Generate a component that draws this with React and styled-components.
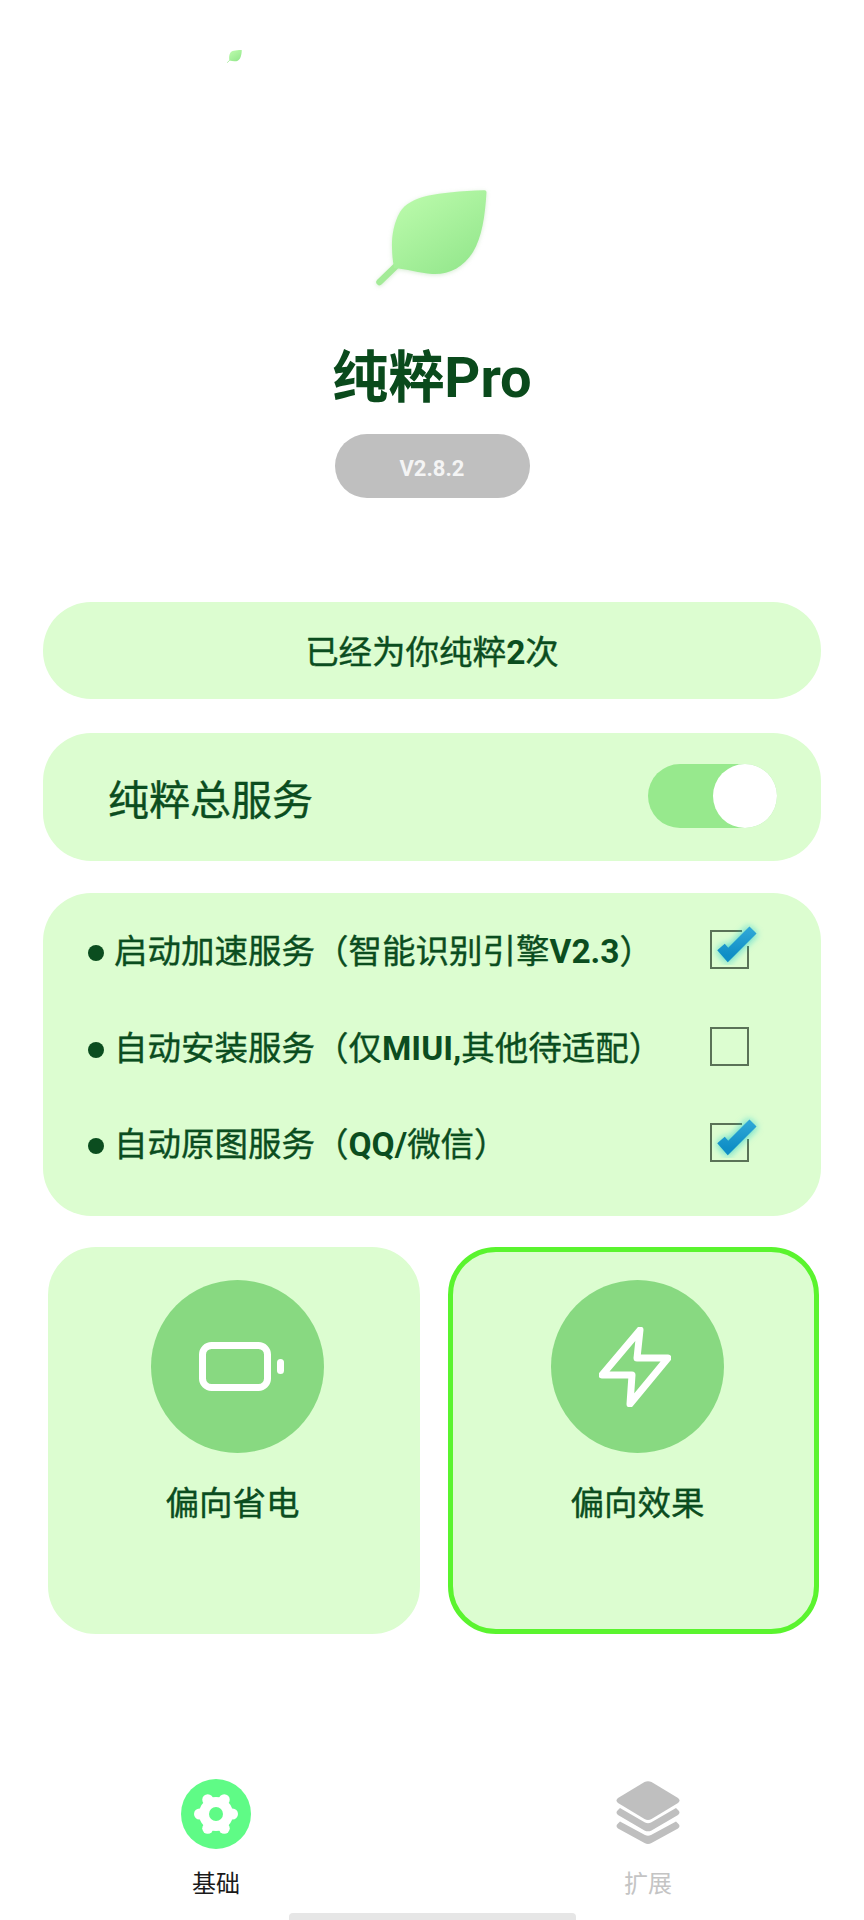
import React from "react";
import styled, { createGlobalStyle } from "styled-components";

const Global = createGlobalStyle`
  html, body { margin: 0; padding: 0; background: #fff; }
  * { box-sizing: border-box; }
  body { font-family: Roboto, "Noto Sans CJK SC", sans-serif; }
`;

const Page = styled.div`
  position: relative;
  width: 864px;
  height: 1920px;
  background: #fff;
  overflow: hidden;
  display: flex;
  flex-direction: column;
  align-items: center;
  color: #0b4d1f;
`;

const FloatingLeaf = styled.svg`
  position: absolute;
  left: 227px;
  top: 50px;
  width: 15px;
  height: 13px;
`;

const BigLeaf = styled.svg`
  width: 112px;
  height: 96px;
  filter: drop-shadow(0 1px 2px rgba(120, 190, 110, 0.3));
`;

const Hero = styled.header`
  display: flex;
  flex-direction: column;
  align-items: center;
  padding-top: 190px;
  height: 602px;
`;

const Title = styled.h1`
  margin: 60px 0 0;
  font-size: 56px;
  line-height: 64px;
  font-weight: 700;
  color: #0a4a1c;
`;

const Version = styled.div`
  margin-top: 24px;
  width: 195px;
  height: 64px;
  border-radius: 32px;
  background: #bfbfbf;
  color: #f4f4f4;
  font-size: 22px;
  font-weight: 700;
  display: flex;
  align-items: center;
  justify-content: center;
  padding-top: 5px;
`;

const Cards = styled.main`
  width: 778px;
  display: flex;
  flex-direction: column;
`;

const Card = styled.section`
  background: #dcfdd0;
  border-radius: 48px;
`;

const Latin = styled.b`
  font-weight: 700;
  -webkit-text-stroke: 0;
`;

const CountCard = styled(Card)`
  height: 97px;
  display: flex;
  align-items: center;
  justify-content: center;
  padding-bottom: 2px;
  font-size: 33.5px;
  font-weight: 400;
  -webkit-text-stroke: 0.4px #0b4d1f;
`;

const ServiceCard = styled(Card)`
  margin-top: 34px;
  height: 128px;
  display: flex;
  align-items: center;
  justify-content: space-between;
  padding: 0 44px 0 65px;
  font-size: 41px;
  font-weight: 400;
  -webkit-text-stroke: 0.4px #0b4d1f;
`;

const Toggle = styled.div`
  width: 129px;
  height: 64px;
  margin-bottom: 2px;
  border-radius: 32px;
  background: #97e98d;
  display: flex;
  justify-content: flex-end;
`;

const Knob = styled.div`
  width: 64px;
  height: 64px;
  border-radius: 50%;
  background: #fff;
`;

const OptionCard = styled(Card)`
  margin-top: 32px;
  height: 323px;
  padding: 8px 72px 0 45px;
  display: flex;
  flex-direction: column;
`;

const Option = styled.div`
  height: 96.7px;
  display: flex;
  align-items: center;
  justify-content: space-between;
  font-size: 33.5px;
  font-weight: 400;
  -webkit-text-stroke: 0.4px #0b4d1f;
`;

const OptionLabel = styled.span`
  display: flex;
  align-items: center;
  gap: 10px;
  padding-bottom: 2px;
`;

const Dot = styled.i`
  width: 16px;
  height: 16px;
  margin-top: 9px;
  border-radius: 50%;
  background: #0b4d1f;
`;

const CheckBox = styled.div`
  position: relative;
  width: 39px;
  height: 39px;
  border: 2px solid #5a7257;
`;

const CheckMark = styled.svg`
  position: absolute;
  left: 0;
  top: -12px;
  width: 44px;
  height: 44px;
  overflow: visible;
`;

const Modes = styled.div`
  margin-top: 31px;
  align-self: flex-start;
  margin-left: 48px;
  width: 771px;
  display: grid;
  grid-template-columns: 372px 371px;
  justify-content: space-between;
`;

const Mode = styled.button`
  height: 387px;
  border-radius: 48px;
  background: #dcfdd0;
  border: 5px solid ${(p) => (p.$active ? "#5af42e" : "#dcfdd0")};
  padding: 28px 0 0;
  display: flex;
  flex-direction: column;
  align-items: center;
  font: inherit;
  color: inherit;
  font-size: 33.5px;
  font-weight: 400;
  -webkit-text-stroke: 0.4px #0b4d1f;
`;

const ModeIcon = styled.div`
  width: 173px;
  height: 173px;
  margin-left: 7px;
  border-radius: 50%;
  background: #88d981;
  display: flex;
  align-items: center;
  justify-content: center;
`;

const BatteryIcon = styled.svg`
  width: 86px;
  height: 49px;
  margin-left: 8px;
`;

const BoltIcon = styled.svg`
  width: 72px;
  height: 80px;
  margin-right: 4px;
`;

const ModeLabel = styled.span`
  margin-top: 23px;
  margin-left: ${(p) => p.$offset}px;
`;

const Nav = styled.nav`
  position: absolute;
  left: 0;
  right: 0;
  bottom: 0;
  height: 141px;
  display: grid;
  grid-template-columns: 432px 432px;
`;

const Tab = styled.div`
  display: flex;
  flex-direction: column;
  align-items: center;
  font-size: 24px;
  line-height: 30px;
  color: ${(p) => (p.$active ? "#1a1a1a" : "#c4c4c4")};
`;

const TabIcon = styled.div`
  width: 70px;
  height: 70px;
  border-radius: 50%;
  background: ${(p) => (p.$active ? "#5ffb86" : "transparent")};
  padding-top: ${(p) => (p.$active ? "0" : "2px")};
  display: flex;
  align-items: ${(p) => (p.$active ? "center" : "flex-start")};
  justify-content: center;
`;

const TabLabel = styled.span`
  margin-top: 20px;
`;

const GestureBar = styled.div`
  position: absolute;
  left: 289px;
  bottom: 0;
  width: 287px;
  height: 7px;
  border-radius: 4px 4px 0 0;
  background: #e6e6e6;
`;

const Check = ({ id }) => (
  <CheckMark viewBox="0 0 44 44">
    <defs>
      <linearGradient id={id} x1="0" y1="0" x2="0" y2="1">
        <stop offset="0" stopColor="#2ea6d6" />
        <stop offset="1" stopColor="#0f8ec6" />
      </linearGradient>
      <filter id={id + "g"} x="-40%" y="-40%" width="180%" height="180%">
        <feGaussianBlur stdDeviation="3.500" />
      </filter>
    </defs>
    <rect x="30" y="8" width="8" height="18" fill="#dcfdd0" />
    <path d="M9 27 L16 35 L41 10" fill="none" stroke="#1fc8cc" strokeOpacity="0.7" strokeWidth="12" filter={`url(#${id}g)`} />
    <path d="M9 27 L16 35 L41 10" fill="none" stroke={`url(#${id})`} strokeWidth="10" />
  </CheckMark>
);

const LeafShape = ({ id }) => (
  <>
    <defs>
      <linearGradient id={id} x1="0.2" y1="0.1" x2="0.8" y2="0.9">
        <stop offset="0" stopColor="#b8f9a9" />
        <stop offset="1" stopColor="#96e88e" />
      </linearGradient>
    </defs>
    <path d="M3.500 92 L19 77" stroke="#a3eb97" strokeWidth="6.500" strokeLinecap="round" fill="none" />
    <path
      d="M108 0.200 Q110.500 0 110.500 2 C109 27 106 47 97 62 C87 78 72 85 56 84 C44 83 30 79 18 78 C15 60 14 40 24 22 C34 6 60 2 108 0.200 Z"
      fill={`url(#${id})`}
    />
  </>
);

const gearLobes = [0, 60, 120, 180, 240, 300].map((a) => ({
  cx: 22 + 16.5 * Math.cos((a * Math.PI) / 180),
  cy: 20 + 16.5 * Math.sin((a * Math.PI) / 180),
}));

export default function App() {
  return (
    <Page>
      <Global />
      <FloatingLeaf viewBox="0 0 112 96">
        <LeafShape id="leaf-small" />
      </FloatingLeaf>
      <Hero>
        <BigLeaf viewBox="0 0 112 96">
          <LeafShape id="leaf-big" />
        </BigLeaf>
        <Title>纯粹Pro</Title>
        <Version>V2.8.2</Version>
      </Hero>
      <Cards>
        <CountCard>
          <span>已经为你纯粹<Latin>2</Latin>次</span>
        </CountCard>
        <ServiceCard>
          纯粹总服务
          <Toggle>
            <Knob />
          </Toggle>
        </ServiceCard>
        <OptionCard>
          <Option>
            <OptionLabel><Dot /><span>启动加速服务（智能识别引擎<Latin>V2.3</Latin>）</span></OptionLabel>
            <CheckBox><Check id="c1" /></CheckBox>
          </Option>
          <Option>
            <OptionLabel><Dot /><span>自动安装服务（仅<Latin>MIUI,</Latin>其他待适配）</span></OptionLabel>
            <CheckBox />
          </Option>
          <Option>
            <OptionLabel><Dot /><span>自动原图服务（<Latin>QQ/</Latin>微信）</span></OptionLabel>
            <CheckBox><Check id="c2" /></CheckBox>
          </Option>
        </OptionCard>
      </Cards>
      <Modes>
        <Mode>
          <ModeIcon>
            <BatteryIcon viewBox="0 0 86 49" fill="none">
              <rect x="3.500" y="3.500" width="65" height="42" rx="9" stroke="#fff" strokeWidth="7" />
              <rect x="78" y="17" width="7" height="15" rx="3.500" fill="#fff" />
            </BatteryIcon>
          </ModeIcon>
          <ModeLabel $offset={-3}>偏向省电</ModeLabel>
        </Mode>
        <Mode $active>
          <ModeIcon>
            <BoltIcon viewBox="0 0 72 80" fill="none">
              <path d="M41 3 L3 48 H33 L31 77 L69 31 H38 Z" stroke="#fff" strokeWidth="7" strokeLinejoin="round" />
            </BoltIcon>
          </ModeIcon>
          <ModeLabel $offset={8}>偏向效果</ModeLabel>
        </Mode>
      </Modes>
      <Nav>
        <Tab $active>
          <TabIcon $active>
            <svg width="44" height="40" viewBox="0 0 44 40">
              <circle cx="22" cy="20" r="17" fill="#fff" />
              {gearLobes.map((l) => (
                <circle key={l.cx + "-" + l.cy} cx={l.cx} cy={l.cy} r="5.500" fill="#fff" />
              ))}
              <circle cx="22" cy="20" r="7" fill="#5ffb86" />
            </svg>
          </TabIcon>
          <TabLabel>基础</TabLabel>
        </Tab>
        <Tab>
          <TabIcon>
            <svg width="66" height="64" viewBox="-1 0 66 64" fill="#bfbfbf">
              <path d="M28.500 1 Q32 -0.500 35.500 1 L62 17 Q65 19.500 62 22 L35.500 38 Q32 39.800 28.500 38 L2 22 Q-1 19.500 2 17 Z" />
              <path d="M4 27 L29 41.500 Q32 43 35 41.500 L60 27 L62 29 Q65 31.700 62 34 L35.500 49.500 Q32 51.200 28.500 49.500 L2 34 Q-1 31.700 2 29 Z" />
              <path d="M4 40.500 L29 54 Q32 55.500 35 54 L60 40.500 L62 42.500 Q65 45 62 47.500 L35.500 62 Q32 63.800 28.500 62 L2 47.500 Q-1 45 2 42.500 Z" />
            </svg>
          </TabIcon>
          <TabLabel>扩展</TabLabel>
        </Tab>
      </Nav>
      <GestureBar />
    </Page>
  );
}
